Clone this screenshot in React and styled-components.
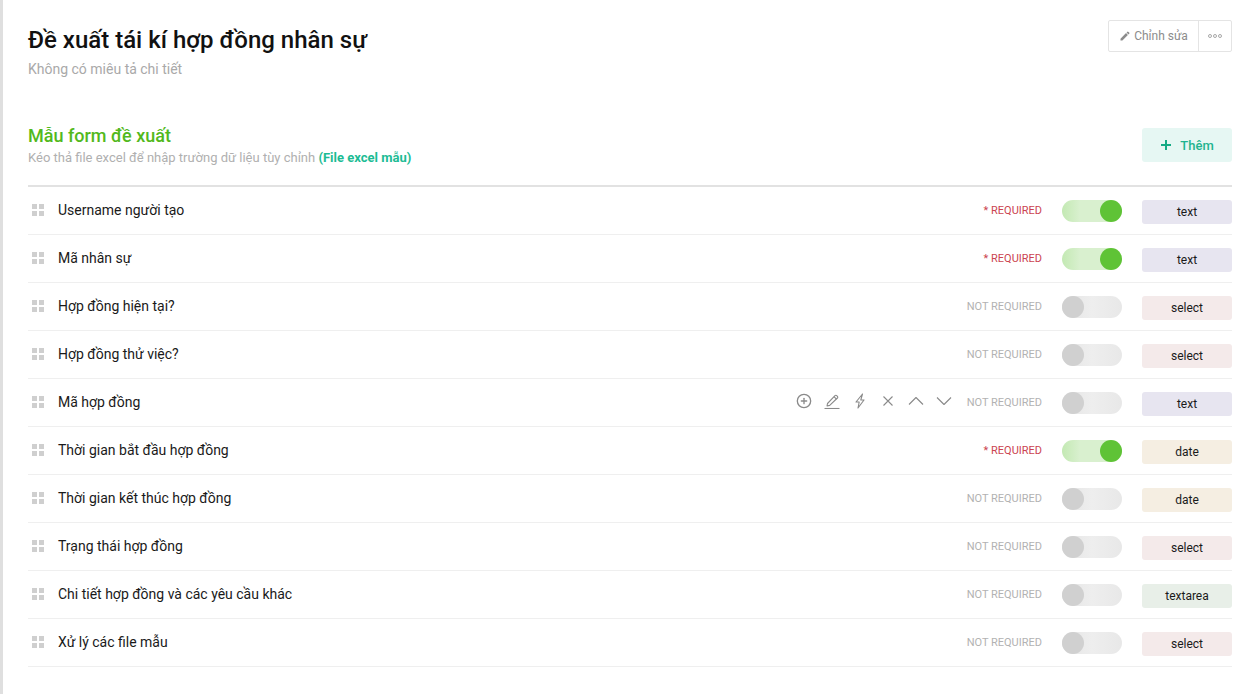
import React from 'react';
import styled, { createGlobalStyle } from 'styled-components';
import { FiPlusCircle } from 'react-icons/fi';
import { MdEdit } from 'react-icons/md';

const GlobalStyle = createGlobalStyle`
    html, body {
        margin: 0;
        padding: 0;
        background: #fff;
    }
    body {
        font-family: Roboto, 'Liberation Sans', sans-serif;
        color: #111;
    }
`;

const Page = styled.div`
    box-sizing: border-box;
    height: 694px;
    overflow: hidden;
    border-left: 3px solid #dfdfdf;
    padding: 20px 20px 0 25px;
`;

const Header = styled.div`
    display: flex;
    justify-content: space-between;
    align-items: flex-start;
    height: 104px;
`;

const Title = styled.h1`
    margin: 0;
    padding-top: 4px;
    font-size: 24px;
    font-weight: 500;
    line-height: 32px;
    color: #111;
`;

const Description = styled.div`
    margin-top: 3px;
    font-size: 14px;
    line-height: 20px;
    color: #a9a9a9;
`;

const ButtonGroup = styled.div`
    display: flex;
    box-sizing: border-box;
    height: 32px;
    border: 1px solid #e4e4e4;
    border-radius: 2px;
`;

const EditButton = styled.div`
    display: flex;
    align-items: center;
    justify-content: center;
    gap: 3px;
    width: 89px;
    font-size: 12px;
    color: #8c8c8c;
    border-right: 1px solid #e4e4e4;
`;

const MoreButton = styled.div`
    display: flex;
    align-items: center;
    justify-content: center;
    gap: 1px;
    flex: 1;
    width: 32px;
`;

const Dot = styled.span`
    box-sizing: border-box;
    width: 4px;
    height: 4px;
    border: 1px solid #a8a8a8;
    border-radius: 50%;
`;

const SectionHeader = styled.div`
    display: flex;
    justify-content: space-between;
    align-items: flex-start;
    height: 61px;
    border-bottom: 2px solid #e2e2e2;
`;

const SectionTitle = styled.h2`
    margin: 0;
    font-size: 18px;
    font-weight: 500;
    line-height: 24px;
    color: #52b91c;
`;

const SectionHint = styled.div`
    margin-top: 1px;
    font-size: 13px;
    line-height: 18px;
    color: #b0b0b0;
`;

const FileLink = styled.span`
    font-weight: 700;
    color: #1cbc94;
`;

const AddButton = styled.div`
    display: flex;
    align-items: center;
    justify-content: center;
    gap: 8px;
    width: 90px;
    height: 34px;
    margin-top: 4px;
    border-radius: 3px;
    background: #e6f7f3;
    color: #1fb48f;
    font-size: 13px;
    font-weight: 500;
`;

const Row = styled.div`
    display: flex;
    align-items: center;
    box-sizing: border-box;
    height: 48px;
    border-bottom: 1px solid #efefef;
`;

const DragHandle = styled.div`
    display: grid;
    grid-template-columns: 5px 5px;
    grid-template-rows: 5px 5px;
    gap: 2px;
    margin: -1px 14px 0 4px;
`;

const DragDot = styled.span`
    background: #cfcfcf;
`;

const FieldName = styled.div`
    flex: 1;
    font-size: 14px;
    line-height: 20px;
    color: #1a1a1a;
    margin-top: -1px;
`;

const Actions = styled.div`
    display: flex;
    align-items: center;
    gap: 12px;
    margin-right: 6px;
    margin-top: -3px;
    color: #8a8a8a;
    line-height: 0;
`;

const Status = styled.div`
    font-size: 11px;
    line-height: 14px;
    width: 84px;
    margin-right: 20px;
    margin-top: 1px;
    text-align: right;
    color: ${({ $required }) => ($required ? '#cb4450' : '#b2b2b2')};
`;

const Toggle = styled.div`
    display: flex;
    justify-content: ${({ $on }) => ($on ? 'flex-end' : 'flex-start')};
    width: 60px;
    height: 22px;
    margin-right: 20px;
    margin-top: 1px;
    border-radius: 11px;
    background: ${({ $on }) =>
        $on
            ? 'linear-gradient(90deg, #c3e9b3 0%, #d9f0cf 30%, #d9f0cf 100%)'
            : 'linear-gradient(90deg, #e4e4e4 0%, #eeeeee 50%, #e8e8e8 100%)'};
`;

const Knob = styled.span`
    width: 22px;
    height: 22px;
    border-radius: 50%;
    background: ${({ $on }) => ($on ? '#5fc336' : '#d0d0d0')};
`;

const tagColors = {
    text: '#e7e5f0',
    select: '#f4eaea',
    date: '#f5eee2',
    textarea: '#e8efe8',
};

const Tag = styled.div`
    width: 90px;
    height: 24px;
    margin-top: 3px;
    border-radius: 3px;
    font-size: 12px;
    line-height: 24px;
    text-align: center;
    color: #1a1a1a;
    background: ${({ $type }) => tagColors[$type]};
`;

const fields = [
    { name: 'Username người tạo', required: true, type: 'text' },
    { name: 'Mã nhân sự', required: true, type: 'text' },
    { name: 'Hợp đồng hiện tại?', required: false, type: 'select' },
    { name: 'Hợp đồng thử việc?', required: false, type: 'select' },
    { name: 'Mã hợp đồng', required: false, type: 'text', hovered: true },
    { name: 'Thời gian bắt đầu hợp đồng', required: true, type: 'date' },
    { name: 'Thời gian kết thúc hợp đồng', required: false, type: 'date' },
    { name: 'Trạng thái hợp đồng', required: false, type: 'select' },
    { name: 'Chi tiết hợp đồng và các yêu cầu khác', required: false, type: 'textarea' },
    { name: 'Xử lý các file mẫu', required: false, type: 'select' },
];

const LineIcon = ({ children }) => (
    <svg width="16" height="16" viewBox="0 0 16 16" fill="none" stroke="currentColor" strokeWidth="1.1" strokeLinejoin="round">
        {children}
    </svg>
);

const FieldActions = () => (
    <Actions>
        <FiPlusCircle size={16} />
        <LineIcon>
            <path d="M3.5 10.5 11 2.6a1.2 1.2 0 0 1 1.7 0l.7.7a1.2 1.2 0 0 1 0 1.7L5.7 12.4 3 13z" />
            <path d="M10 3.7 12.4 6.1" />
            <path d="M0.5 15.5h15" />
        </LineIcon>
        <LineIcon>
            <path d="M10.5 1 4 9h3.2L6 15l6-8H8.8z" />
        </LineIcon>
        <LineIcon>
            <path d="M3.5 3.5l9 9M12.5 3.5l-9 9" />
        </LineIcon>
        <LineIcon>
            <path d="M1 11.5 8 4.5l7 7" />
        </LineIcon>
        <LineIcon>
            <path d="M1 4.5 8 11.5l7-7" />
        </LineIcon>
    </Actions>
);

const FieldRow = ({ field }) => (
    <Row>
        <DragHandle>
            <DragDot />
            <DragDot />
            <DragDot />
            <DragDot />
        </DragHandle>
        <FieldName>{field.name}</FieldName>
        {field.hovered && <FieldActions />}
        <Status $required={field.required}>{field.required ? '* REQUIRED' : 'NOT REQUIRED'}</Status>
        <Toggle $on={field.required}>
            <Knob $on={field.required} />
        </Toggle>
        <Tag $type={field.type}>{field.type}</Tag>
    </Row>
);

const App = () => (
    <Page>
        <GlobalStyle />
        <Header>
            <div>
                <Title>Đề xuất tái kí hợp đồng nhân sự</Title>
                <Description>Không có miêu tả chi tiết</Description>
            </div>
            <ButtonGroup>
                <EditButton>
                    <MdEdit size={12} />
                    Chỉnh sửa
                </EditButton>
                <MoreButton>
                    <Dot />
                    <Dot />
                    <Dot />
                </MoreButton>
            </ButtonGroup>
        </Header>
        <SectionHeader>
            <div>
                <SectionTitle>Mẫu form đề xuất</SectionTitle>
                <SectionHint>
                    Kéo thả file excel để nhập trường dữ liệu tùy chỉnh <FileLink>(File excel mẫu)</FileLink>
                </SectionHint>
            </div>
            <AddButton>
                <svg width="12" height="12" viewBox="0 0 12 12" fill="none" stroke="#14ab85" strokeWidth="2">
                    <path d="M6 1v10M1 6h10" />
                </svg>
                Thêm
            </AddButton>
        </SectionHeader>
        {fields.map(field => (
            <FieldRow key={field.name} field={field} />
        ))}
    </Page>
);

export default App;
